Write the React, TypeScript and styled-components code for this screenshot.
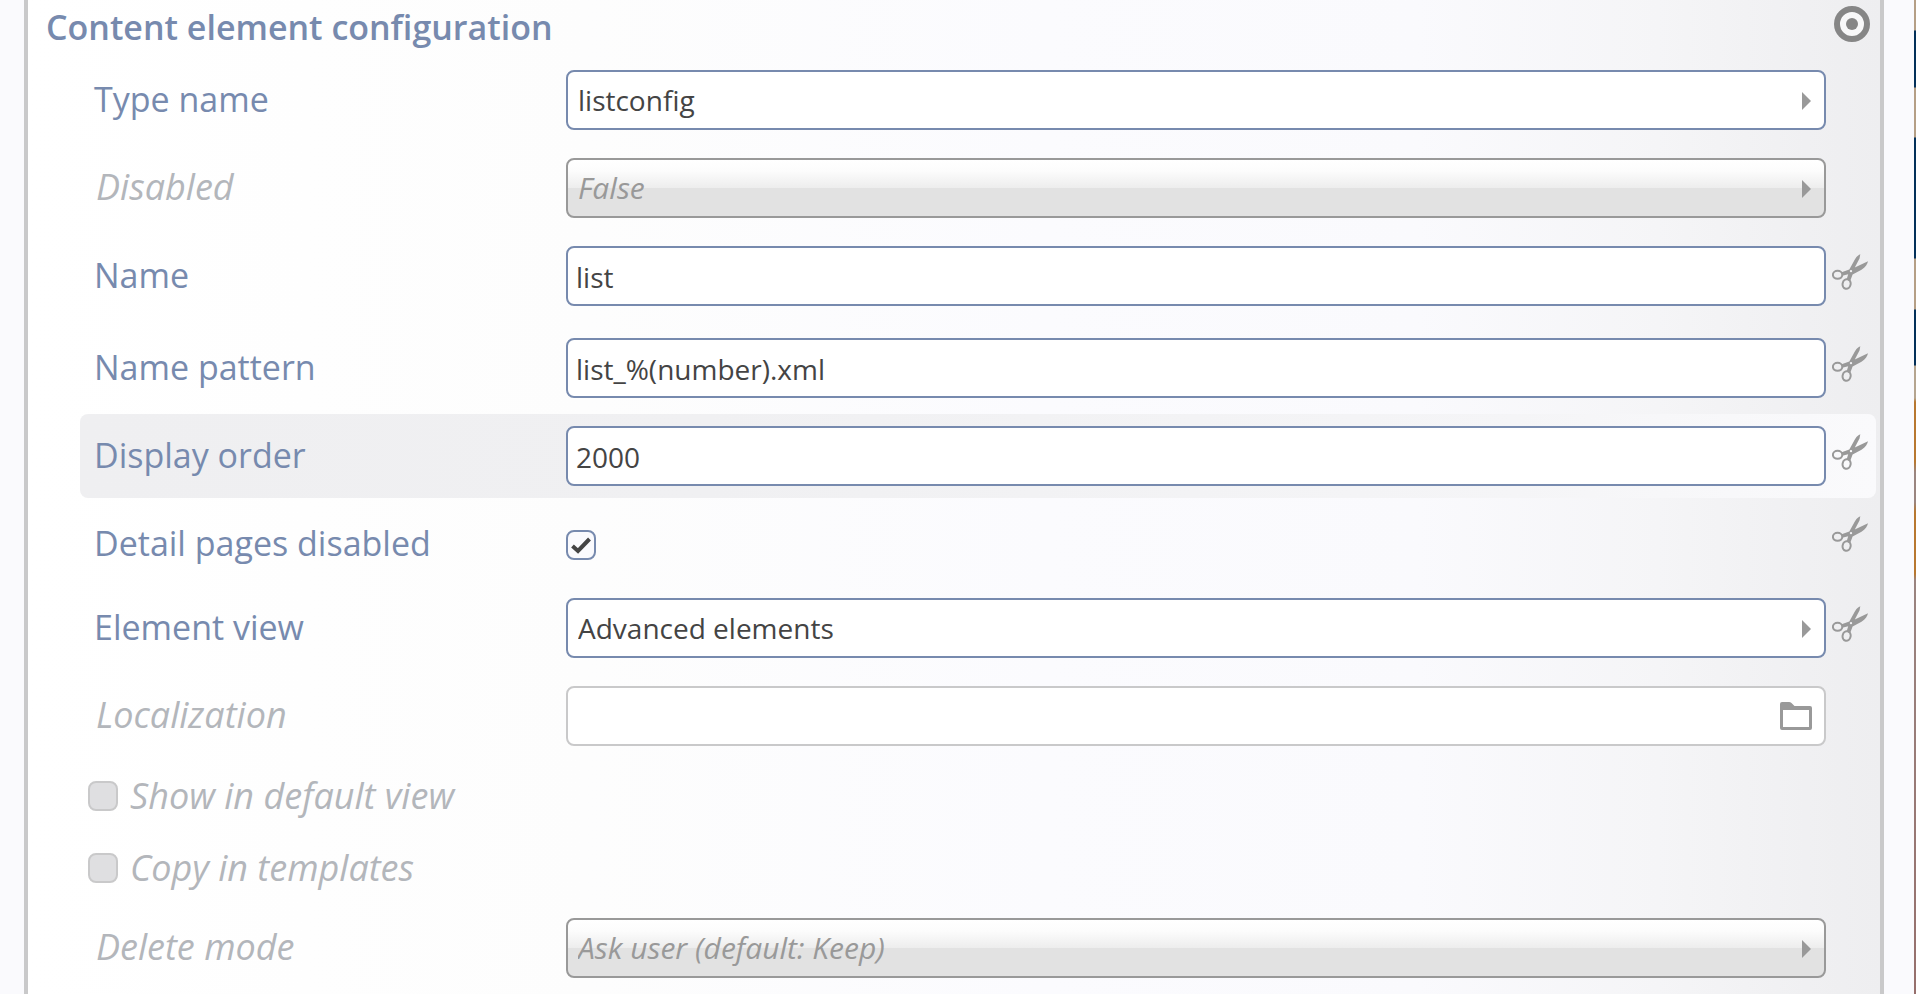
import React, { useId } from 'react';
import styled, { createGlobalStyle, css } from 'styled-components';

const blue = '#778aae';
const muted = '#b3b6bb';
const gray = '#999999';

const GlobalStyle = createGlobalStyle`
  *, *::before, *::after { box-sizing: border-box; }
  html, body, #root { height: 100%; }
  body {
    margin: 0;
    overflow: hidden;
    background: #fafafd;
    font-family: 'Open Sans', 'Noto Sans', sans-serif;
  }
`;

const Page = styled.div`
  display: flex;
  min-height: 100vh;
  padding-left: 24px;
`;

const Panel = styled.form`
  flex: 1;
  min-width: 0;
  border: solid #c9c9ca;
  border-width: 0 4px;
  background: linear-gradient(to right, #ffffff 0%, #fdfdfd 30%, #fbfbfe 55%, #fafafd 75%, #f5f5f7 88%, #f0f0f2 96%, #eeeef0 100%);
`;

const Margin = styled.div`
  width: 30px;
`;

/* Sliver of the page photograph that shows beside the dialog. */
const Photo = styled.div`
  width: 2px;
  background: linear-gradient(
    #b59f86 0 30px, #03305a 31px 87px, #b59f86 88px 137px, #03305a 138px 258px,
    #b59f86 259px 309px, #03305a 310px 365px, #b5a590 366px 398px, #b87830 402px 462px,
    #9a8580 472px 502px, #b87830 512px 574px, #9a8480 580px, #966f6c 100%
  );
`;

const Header = styled.header`
  display: flex;
  justify-content: space-between;
  height: 58px;
  padding: 4px 10px 0 18px;
`;

const Title = styled.h1`
  margin: 0;
  color: ${blue};
  font-size: 34px;
  line-height: 46px;
  font-weight: 600;
`;

const IconButton = styled.button`
  flex: none;
  display: block;
  width: 36px;
  height: 36px;
  padding: 0;
  border: 0;
  background: none;
  color: ${gray};
  cursor: pointer;
  svg { display: block; }
`;

const TargetButton = styled(IconButton)`
  margin-top: 2px;
  color: #868686;
`;

const Rows = styled.div`
  display: flex;
  flex-direction: column;
  gap: 4px;
  padding: 0 4px 0 52px;
`;

const Row = styled.div<{ $active?: boolean; $spaced?: boolean; $compact?: boolean }>`
  display: grid;
  grid-template-columns: 466px minmax(0, 1fr) 36px;
  column-gap: 6px;
  height: ${p => (p.$compact ? 80 : 84)}px;
  margin-bottom: ${p => (p.$spaced ? 4 : 0)}px;
  padding: 12px 8px 0 14px;
  border-radius: 8px;
  ${p => p.$active && css`background: linear-gradient(to right, #efeff1 0%, #f0f0f2 35%, #f5f5f7 80%, #fafafc 100%);`}
  ${IconButton} { margin-top: ${p => (p.$compact ? 2 : 8)}px; }
`;

const Label = styled.label<{ $off?: boolean }>`
  padding-left: ${p => (p.$off ? 2 : 0)}px;
  color: ${p => (p.$off ? muted : blue)};
  font-size: ${p => (p.$off ? 36 : 34)}px;
  line-height: 58px;
  font-style: ${p => (p.$off ? 'italic' : 'normal')};
  white-space: nowrap;
`;

const Box = styled.div`
  position: relative;
  height: 60px;
`;

const control = css`
  display: block;
  width: 100%;
  height: 60px;
  margin: 0;
  border: 2px solid ${blue};
  border-radius: 8px;
  outline: 0;
  background: #ffffff;
  color: #444444;
  font-family: inherit;
  font-size: 28px;
  line-height: 40px;
`;

const TextInput = styled.input`
  ${control}
  padding: 2px 8px 0;
  &:disabled { border-color: #c9c9ca; }
`;

const Select = styled.select`
  ${control}
  appearance: none;
  padding: 0 40px 0 10px;
  &:disabled {
    border-color: ${gray};
    background: linear-gradient(#ffffff 0, #fcfcfc 20%, #ededed 50%, #e2e2e2 50%, #e2e2e2 100%);
    color: ${gray};
    font-size: 30px;
    font-style: italic;
    opacity: 1;
  }
`;

const Arrow = styled.svg`
  position: absolute;
  top: 22px;
  right: 15px;
  pointer-events: none;
`;

const FolderButton = styled.button`
  position: absolute;
  top: 14px;
  right: 14px;
  width: 32px;
  height: 32px;
  padding: 0;
  border: 0;
  background: none;
  svg { display: block; }
`;

const TickBox = styled.span`
  flex: none;
  position: relative;
  display: block;
  width: 30px;
  height: 30px;
  svg { position: absolute; inset: 0; pointer-events: none; }
`;

const Tick = styled.input`
  appearance: none;
  display: block;
  width: 30px;
  height: 30px;
  margin: 0;
  border: 2px solid ${blue};
  border-radius: 8px;
  background: #fafafd;
  &:disabled { border-color: #c9c9ca; background: #dfdfe1; }
`;

const TickCell = styled.div`
  padding-top: 16px;
`;

const Options = styled.div`
  display: flex;
  flex-direction: column;
  justify-content: space-between;
  height: 140px;
  padding-left: 8px;
`;

const Option = styled.div`
  display: flex;
  align-items: center;
  gap: 10px;
  height: 68px;
`;

function Scissors() {
  return (
    <IconButton type="button" aria-label="Remove">
      <svg width="36" height="36" viewBox="0 0 36 36">
        <g fill="none" stroke="currentColor" strokeWidth="2">
          <ellipse cx="5.6" cy="20.8" rx="4.7" ry="4" />
          <ellipse cx="14.6" cy="30" rx="4" ry="4.8" transform="rotate(12 14.6 30)" />
        </g>
        <path fill="currentColor" fillRule="evenodd" d="M28.3 0.2C25 1.6 23.5 4 22 7L17.3 15.4 9.6 18.2 10.2 21.8 16.2 20.2 14.6 25.4 18.2 27 20.6 20.6 29.5 15.8C33.5 13.2 35.300 10.500 36 7.300L22.800 13.400 27.500 4.500ZM19 15.900A1.200 1.200 0 1 0 19 18.300 1.200 1.200 0 1 0 19 15.900Z" />
      </svg>
    </IconButton>
  );
}

function Choice({ label, value, off, cut }: { label: string; value: string; off?: boolean; cut?: boolean }) {
  const id = useId();
  return (
    <Row>
      <Label htmlFor={id} $off={off}>{label}</Label>
      <Box>
        <Select id={id} disabled={off} defaultValue={value}><option>{value}</option></Select>
        <Arrow width="9" height="18" viewBox="0 0 9 18"><path d="M0 0 9 9 0 18Z" fill={gray} /></Arrow>
      </Box>
      {cut && <Scissors />}
    </Row>
  );
}

function Field({ label, value, active, spaced }: { label: string; value: string; active?: boolean; spaced?: boolean }) {
  const id = useId();
  return (
    <Row $active={active} $spaced={spaced}>
      <Label htmlFor={id}>{label}</Label>
      <Box><TextInput id={id} type="text" defaultValue={value} /></Box>
      <Scissors />
    </Row>
  );
}

function OffOption({ label }: { label: string }) {
  const id = useId();
  return (
    <Option>
      <TickBox><Tick id={id} type="checkbox" disabled /></TickBox>
      <Label htmlFor={id} $off>{label}</Label>
    </Option>
  );
}

export default function App() {
  return (
    <>
      <GlobalStyle />
      <Page>
        <Panel>
          <Header>
            <Title>Content element configuration</Title>
            <TargetButton type="button" aria-label="Element actions">
              <svg width="36" height="36" viewBox="0 0 36 36">
                <circle cx="18" cy="18" r="15" fill="#f8f8f9" stroke="currentColor" strokeWidth="6" />
                <circle cx="18" cy="18" r="6" fill="currentColor" />
              </svg>
            </TargetButton>
          </Header>
          <Rows>
            <Choice label="Type name" value="listconfig" />
            <Choice label="Disabled" value="False" off />
            <Field label="Name" value="list" spaced />
            <Field label="Name pattern" value="list_%(number).xml" />
            <Field label="Display order" value="2000" active />
            <Row $compact>
              <Label htmlFor="detail-pages">Detail pages disabled</Label>
              <TickCell>
                <TickBox>
                  <Tick id="detail-pages" type="checkbox" defaultChecked />
                  <svg width="30" height="30" viewBox="0 0 30 30">
                    <path d="M6.500 16 12 21 23.500 9" fill="none" stroke="#444444" strokeWidth="4" />
                  </svg>
                </TickBox>
              </TickCell>
              <Scissors />
            </Row>
            <Choice label="Element view" value="Advanced elements" cut />
            <Row>
              <Label htmlFor="localization" $off>Localization</Label>
              <Box>
                <TextInput id="localization" type="text" disabled />
                <FolderButton type="button" disabled aria-label="Browse">
                  <svg width="32" height="32" viewBox="0 0 32 32">
                    <path fill={gray} fillRule="evenodd" d="M2 2H9Q10.500 2 11.500 3L14.500 6H30Q32 6 32 8V28Q32 30 30 30H2Q0 30 0 28V4Q0 2 2 2ZM3 10V27H29V10Z" />
                  </svg>
                </FolderButton>
              </Box>
            </Row>
            <Options>
              <OffOption label="Show in default view" />
              <OffOption label="Copy in templates" />
            </Options>
            <Choice label="Delete mode" value="Ask user (default: Keep)" off />
          </Rows>
        </Panel>
        <Margin />
        <Photo />
      </Page>
    </>
  );
}
